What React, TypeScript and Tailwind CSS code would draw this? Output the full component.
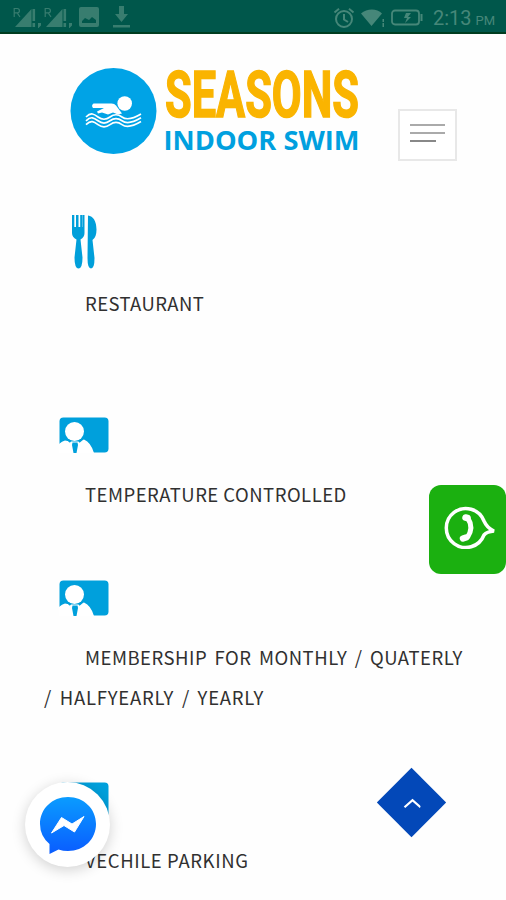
import type { ReactNode } from "react";

const RoamingSignal = () => (
  <svg viewBox="0 0 28 22" className="h-[22px] w-7" fill="currentColor">
    <path d="M1.2 11V2.5h3a2.2 2.2 0 0 1 0 4.4h-3m3 0L7 11" fill="none" stroke="currentColor" strokeWidth="1.2" />
    <path d="M2 21 18.5 3V21Z" />
    <path d="M19.500 3h2.600v12h-2.600zM19.500 17h2.600v4h-2.600zM25 17h3v2.500l-2.500 2.500H25z" />
  </svg>
);

const StatusBar = () => (
  <div className="flex h-[34px] shrink-0 items-center border-b-2 border-[#003d20] bg-[#00574b] text-[#468779]">
    <div className="flex items-center pl-[13px] pt-[2px] opacity-80">
      <RoamingSignal />
      <div className="ml-[3px]">
        <RoamingSignal />
      </div>
      <svg viewBox="0 0 20 20" className="ml-[7px] h-5 w-5">
        <path
          fill="currentColor"
          fillRule="evenodd"
          d="M2 0h16a2 2 0 0 1 2 2v16a2 2 0 0 1-2 2H2a2 2 0 0 1-2-2V2a2 2 0 0 1 2-2Zm1 16h14v-3l-4-3-3 3-4-2-3 3Z"
        />
      </svg>
      <svg viewBox="0 0 17 22" className="ml-[14px] h-[22px] w-[17px]" fill="currentColor">
        <path d="M6 0h5v8h4l-6.500 8L2 8h4zM0 19h17v2.500H0z" />
      </svg>
    </div>
    <div className="ml-auto flex items-center pr-[10px] pt-[3px]">
      <svg viewBox="0 0 22 22" className="h-[22px] w-[22px]" fill="none" stroke="currentColor" strokeWidth="2">
        <circle cx="11" cy="12" r="8" />
        <path d="M11 7v5.500l4 2.500M1.500 5.500 6 1.800M20.500 5.500 16 1.800" />
      </svg>
      <svg viewBox="0 0 24 20" className="ml-[6px] h-5 w-6" fill="currentColor">
        <path d="M0 5.500C6 0 16 0 21 5.500L10.500 18ZM21.500 11H23v3h-1.500zM21.500 15H23v4h-1.500z" />
      </svg>
      <svg viewBox="0 0 32 18" className="ml-[6px] h-[18px] w-8">
        <rect x="1" y="1.500" width="27" height="14" rx="3" fill="none" stroke="currentColor" strokeWidth="1.800" />
        <path d="M29.500 5h2v7h-2zM20 4h-5l-2 5h3l-2 5 6-6h-3Z" fill="currentColor" />
      </svg>
      <span className="ml-[10px] w-[63px] whitespace-nowrap font-['Roboto',sans-serif] text-[20px] leading-none">
        2:13<span className="ml-[4px] text-[13px]">PM</span>
      </span>
    </div>
  </div>
);

const Logo = () => (
  <svg viewBox="0 0 292 94" className="h-[94px] w-[292px] overflow-visible">
    <circle cx="43.500" cy="44" r="43" fill="#00a3e6" />
    <g fill="#fff">
      <circle cx="54.700" cy="36.500" r="7.300" />
      <path d="M23.500 36.500h18q3 0 4.500 2l6 8-4 1-5-2-5 2-6-2-4 1-1-2 7-3.500H23a2.800 2.800 0 0 1 .500-4.500Z" />
    </g>
    <g fill="none" stroke="#fff" strokeWidth="1.700">
      <path d="M16 50c5-5 8-3 12 0s8 3 12 0 8-3 12 0 9 3 19-3" />
      <path d="M16 53.800c5-5 8-3 12 0s8 3 12 0 8-3 12 0 9 3 19-3" />
      <path d="M16 57.600c5-5 8-3 12 0s8 3 12 0 8-3 12 0 9 3 19-3" />
    </g>
    <text
      x="95"
      y="49.500"
      textLength="194"
      lengthAdjust="spacingAndGlyphs"
      fill="#fab400"
      stroke="#fab400"
      strokeWidth="1.500"
      className="font-['Roboto',sans-serif] text-[64px] font-bold"
    >
      SEASONS
    </text>
    <text
      x="93.500"
      y="83"
      textLength="196"
      lengthAdjust="spacingAndGlyphs"
      fill="#00a0df"
      className="font-['Open_Sans',sans-serif] text-[27.500px] font-bold"
    >
      INDOOR SWIM
    </text>
  </svg>
);

const Header = () => (
  <header className="flex h-[180px] shrink-0 items-start pl-[70px] pt-[33px]">
    <Logo />
    <button className="ml-[36px] mt-[42px] flex h-[52px] w-[59px] flex-col gap-[6px] border-2 border-[#e8e8e8] bg-white pl-[10px] pt-[13px]">
      <span className="h-[2px] w-[35px] bg-[#aaa]" />
      <span className="h-[2px] w-[35px] bg-[#aaa]" />
      <span className="h-[2px] w-[26px] bg-[#888]" />
    </button>
  </header>
);

const CutleryIcon = () => (
  <svg viewBox="0 0 27 56" className="ml-[27px] h-14 w-[27px]" fill="#009fda">
    <path d="M1 1h2.300v12h1.700V1h2.500v12h1.700V1h2.500v12h.300V1h1.500v18q0 4-4 6.500l2 18q0 11-4 11t-4-11l2-18Q1 23 1 19Z" />
    <path d="M17 1.500q8 1 8.500 14 0 8-4 10.500l2 18q0 10.500-3.500 10.500t-3.500-10.500Z" />
  </svg>
);

const ContactCardIcon = () => (
  <svg viewBox="0 0 50 36" className="ml-[15px] h-9 w-[50px]">
    <rect x=".5" y=".5" width="49" height="35" rx="4" fill="#00a0dc" />
    <path d="M0 27q3-3 6-3.500l5 1h9l5-2q7 3 10 13.500H0Z" fill="#fff" />
    <circle cx="15.500" cy="14.500" r="9.500" fill="#fff" />
    <path d="M13.500 25.500h5l.500 2.500-1.500 8h-3l-1.500-8Z" fill="#00a0dc" />
    <path d="m8.500 22.500 3 2.500M23 22.500 20 25" stroke="#00a0dc" strokeWidth="1.800" />
  </svg>
);

interface FeatureProps {
  icon: ReactNode;
  className: string;
  children: ReactNode;
}

const Feature = ({ icon, className, children }: FeatureProps) => (
  <div className={`flex shrink-0 flex-col pl-[44px] ${className}`}>
    {icon}
    <p className="indent-[41px] font-['Noto_Sans_CJK_SC',sans-serif] text-[18.5px] leading-[39.5px] text-[#303030]">
      {children}
    </p>
  </div>
);

const CallButton = () => (
  <button className="absolute right-0 top-[485px] flex h-[89px] w-[77px] items-center justify-center rounded-[12px] bg-[#1bb010]">
    <svg viewBox="0 0 54 44" className="mb-[6px] ml-[6px] h-11 w-[54px]" fill="none" stroke="#fff">
      <path d="M40 16A19.500 19.500 0 1 0 40 30Q43 26.500 50 26Q43 23 40 16Z" strokeWidth="3.500" strokeLinejoin="miter" />
      <path d="M24 13.500q6 9-.500 19" strokeWidth="5" />
      <path d="m21.500 12.500 2 .5M19 33.500l3-1" strokeWidth="6.500" strokeLinecap="round" />
    </svg>
  </button>
);

const MessengerButton = () => (
  <button className="absolute left-[25px] top-[782px] flex h-[85px] w-[85px] items-center justify-center rounded-full bg-white shadow-[0_3px_14px_rgba(0,0,0,0.18)]">
    <svg viewBox="0 0 58 58" className="h-[58px] w-[58px]">
      <defs>
        <linearGradient id="messenger" x1="0" y1="0" x2="0" y2="1">
          <stop offset="0" stopColor="#0a9cff" />
          <stop offset="1" stopColor="#0a5cff" />
        </linearGradient>
      </defs>
      <path
        d="M29 1C13 1 1 13 1 28q0 12 9.500 20V58l9-4.500Q24 55 29 55c16 0 28-12 28-27S45 1 29 1Z"
        fill="url(#messenger)"
      />
      <path d="M12.500 37 22.500 21.500 33 28 45 20.500 35.500 36 25 29.500Z" fill="#fff" stroke="#fff" strokeLinejoin="round" />
    </svg>
  </button>
);

const ScrollTopButton = () => (
  <button className="absolute left-[387px] top-[778px] flex h-[49px] w-[49px] rotate-45 items-center justify-center bg-[#0348b8]">
    <svg viewBox="0 0 18 12" className="ml-[1px] h-3 w-[18px] -rotate-45" fill="none" stroke="#fff" strokeWidth="2.200">
      <path d="m2 10 8-7 8 7" />
    </svg>
  </button>
);

export default function App() {
  return (
    <div className="relative flex h-[900px] w-[506px] flex-col overflow-hidden bg-[#fefefe]">
      <StatusBar />
      <Header />
      <Feature icon={<CutleryIcon />} className="h-[203px] gap-[14px] tracking-[0.4px]">
        RESTAURANT
      </Feature>
      <Feature icon={<ContactCardIcon />} className="h-[163px] gap-[22px] tracking-[0.48px]">
        TEMPERATURE CONTROLLED
      </Feature>
      <Feature
        icon={<ContactCardIcon />}
        className="h-[202px] gap-[22px] tracking-[0.5px] [word-spacing:2.800px]"
      >
        MEMBERSHIP FOR MONTHLY / QUATERLY
        <br />
        <span className="tracking-[0.75px]">/ HALFYEARLY / YEARLY</span>
      </Feature>
      <Feature icon={<ContactCardIcon />} className="gap-[23px] tracking-[0.6px]">
        VECHILE PARKING
      </Feature>
      <CallButton />
      <MessengerButton />
      <ScrollTopButton />
    </div>
  );
}
